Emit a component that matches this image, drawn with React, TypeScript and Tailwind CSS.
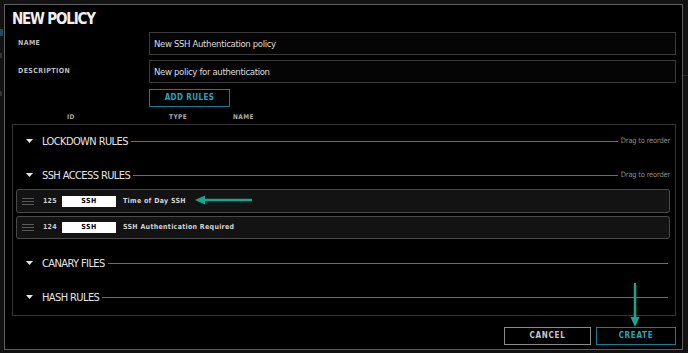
import React from "react";

const NARROW = "font-['Liberation_Sans_Narrow','DejaVu_Sans_Condensed',Roboto,sans-serif]";

function Caret() {
  return (
    <svg width="7" height="4" viewBox="0 0 7 4" className="shrink-0">
      <path d="M0 0 H7 L3.5 4 Z" fill="#e8e8e8" />
    </svg>
  );
}

function SectionHeader({ title, drag }: { title: string; drag?: boolean }) {
  return (
    <div className={`flex items-center h-[20px] pl-[13px] ${drag ? "pr-[5px]" : "pr-[7px]"}`}>
      <Caret />
      <span className="ml-[9px] text-[11px] tracking-[-0.6px] leading-none text-[#e4e4e4] whitespace-nowrap">{title}</span>
      <div className="flex-1 h-px bg-[#6c6c6c] ml-[3px]" />
      {drag && (
        <span className="ml-[3px] text-[7.5px] tracking-[-0.2px] leading-none text-[#8a8a8a] whitespace-nowrap">Drag to reorder</span>
      )}
    </div>
  );
}

function RuleRow({ id, name, h }: { id: string; name: string; h: string }) {
  return (
    <div
      className={`flex items-center ${h} ml-[3px] mr-[5px] rounded-[3px] border border-[#4a4a4a] bg-[#131313] pl-[5px]`}
    >
      <div className="flex flex-col gap-[2px] w-[12px] shrink-0">
        <div className="h-px bg-[#5a5a5a]" />
        <div className="h-px bg-[#5a5a5a]" />
        <div className="h-px bg-[#5a5a5a]" />
      </div>
      <span className="ml-[9px] w-[12px] text-[7px] font-bold tracking-[0.2px] text-[#cfcfcf] leading-none">{id}</span>
      <div className="ml-[7px] w-[54px] h-[11px] bg-white flex items-center justify-center">
        <span className="text-[7px] font-bold tracking-[0.5px] text-black leading-none">SSH</span>
      </div>
      <span className="ml-[7px] text-[7px] font-bold tracking-[0.3px] text-[#d4d4d4] leading-none whitespace-nowrap">
        {name}
      </span>
    </div>
  );
}

export default function App() {
  return (
    <div className={`relative w-[688px] h-[353px] bg-[#121212] pl-[4px] pt-[4px] pr-[5px] pb-[3px] overflow-hidden ${NARROW}`}>
      {/* faint background page peeking at the edges */}
      <div className="absolute left-0 top-[29px] w-[3px] h-[7px] bg-[#1d4d55]" />
      <div className="absolute left-0 top-[53px] w-[2px] h-[5px] bg-[#333]" />
      <div className="absolute left-0 top-[91px] w-[2px] h-[5px] bg-[#333]" />
      <div className="absolute right-0 top-[75px] w-[5px] h-px bg-[#2a2a2a]" />

      <div className="relative h-full border border-[#5e5e5e] bg-black flex flex-col">
        {/* Title */}
        <div className="h-[27px] pl-[7px] pt-[2px]">
          <span className="text-[15px] font-bold leading-[20px] text-[#f0f0f0] tracking-[-1.2px]">NEW POLICY</span>
        </div>

        {/* Name */}
        <div className="flex items-center pr-[6px]">
          <div className="w-[144px] pl-[13px] text-[7px] font-bold tracking-[0.4px] text-[#bdbdbd] leading-none">NAME</div>
          <div className="flex-1 h-[23px] border border-[#3a3a3a] bg-[#050505] flex items-center pl-[4px]">
            <span className="text-[9.5px] tracking-[-0.35px] text-[#dcdcdc] leading-none">New SSH Authentication policy</span>
          </div>
        </div>

        {/* Description */}
        <div className="flex items-center pr-[6px] mt-[5px]">
          <div className="w-[144px] pl-[13px] text-[7px] font-bold tracking-[0.4px] text-[#bdbdbd] leading-none">DESCRIPTION</div>
          <div className="flex-1 h-[23px] border border-[#3a3a3a] bg-[#050505] flex items-center pl-[4px]">
            <span className="text-[9.5px] tracking-[-0.35px] text-[#dcdcdc] leading-none">New policy for authentication</span>
          </div>
        </div>

        {/* Add rules */}
        <div className="pl-[144px] mt-[6px]">
          <div className="w-[81px] h-[18px] border border-[#177e91] flex items-center justify-center">
            <span className="text-[8px] font-bold tracking-[0.4px] text-[#2aa3bb] leading-none">ADD RULES</span>
          </div>
        </div>

        {/* Column headers */}
        <div className="flex items-center h-[14px] mt-[3px] pl-[62px] text-[6.5px] font-bold tracking-[0.4px] text-[#a8a8a8] leading-none">
          <span className="w-[102px]">ID</span>
          <span className="w-[64px]">TYPE</span>
          <span>NAME</span>
        </div>

        {/* Rules panel */}
        <div className="ml-[7px] mr-[6px] border border-[#343434] pt-[6px] pb-[8px] flex flex-col">
          <SectionHeader title="LOCKDOWN RULES" drag />
          <div className="h-[14px]" />
          <SectionHeader title="SSH ACCESS RULES" drag />
          <div className="h-[4px]" />
          <RuleRow id="125" name="Time of Day SSH" h="h-[24px]" />
          <div className="h-[3px]" />
          <RuleRow id="124" name="SSH Authentication Required" h="h-[23px]" />
          <div className="h-[14px]" />
          <SectionHeader title="CANARY FILES" />
          <div className="h-[14px]" />
          <SectionHeader title="HASH RULES" />
        </div>

        {/* Footer */}
        <div className="flex justify-end gap-[5px] pr-[6px] mt-[11px]">
          <div className="w-[87px] h-[18px] border border-[#8a8a8a] flex items-center justify-center">
            <span className="text-[8px] font-bold tracking-[0.7px] text-[#c8c8c8] leading-none">CANCEL</span>
          </div>
          <div className="w-[80px] h-[18px] border border-[#177e91] flex items-center justify-center">
            <span className="text-[8px] font-bold tracking-[0.7px] text-[#2aa3bb] leading-none">CREATE</span>
          </div>
        </div>
      </div>

      {/* Annotation arrows */}
      <svg className="absolute left-[192px] top-[194px]" width="62" height="12" viewBox="0 0 62 12">
        <line x1="10" y1="6" x2="59" y2="6" stroke="#16a88f" strokeWidth="2.5" strokeLinecap="round" />
        <path d="M3 6 L13 1.5 L13 10.5 Z" fill="#16a88f" />
      </svg>
      <svg className="absolute left-[629px] top-[282px]" width="12" height="47" viewBox="0 0 12 47">
        <line x1="6" y1="2" x2="6" y2="37" stroke="#16a88f" strokeWidth="2.5" strokeLinecap="round" />
        <path d="M6 45 L1.5 35 L10.5 35 Z" fill="#16a88f" />
      </svg>
    </div>
  );
}
